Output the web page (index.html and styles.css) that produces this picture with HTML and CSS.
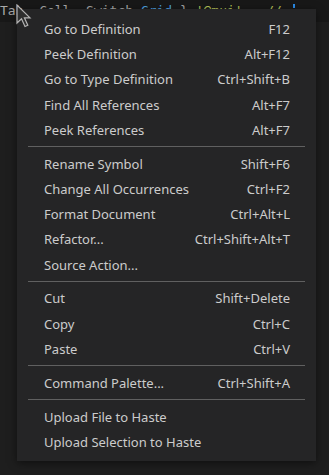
FILE: index.html
```html
<!DOCTYPE html>
<html>
<head>
  <title>Editor context menu</title>
  <meta name="viewport" content="width=device-width, initial-scale=1.0">
  <link rel="stylesheet" href="styles.css">
</head>
<body>
  <div class="editor">
    <div class="code-line"><span class="tok-plain">Tab, Cell, Switch </span><span class="tok-kw">Grid </span><span class="tok-plain">} </span><span class="tok-str">'@mui'</span><span class="tok-plain"> ; </span><span class="tok-str">//</span></div>
    <span class="caret"></span>
  </div>

  <div class="menu">
    <div class="item"><span>Go to Definition</span><span class="key">F12</span></div>
    <div class="item"><span>Peek Definition</span><span class="key">Alt+F12</span></div>
    <div class="item"><span>Go to Type Definition</span><span class="key">Ctrl+Shift+B</span></div>
    <div class="item"><span>Find All References</span><span class="key">Alt+F7</span></div>
    <div class="item"><span>Peek References</span><span class="key">Alt+F7</span></div>
    <div class="sep"></div>
    <div class="item"><span>Rename Symbol</span><span class="key">Shift+F6</span></div>
    <div class="item"><span>Change All Occurrences</span><span class="key">Ctrl+F2</span></div>
    <div class="item"><span>Format Document</span><span class="key">Ctrl+Alt+L</span></div>
    <div class="item"><span>Refactor...</span><span class="key">Ctrl+Shift+Alt+T</span></div>
    <div class="item"><span>Source Action...</span></div>
    <div class="sep"></div>
    <div class="item"><span>Cut</span><span class="key">Shift+Delete</span></div>
    <div class="item"><span>Copy</span><span class="key">Ctrl+C</span></div>
    <div class="item"><span>Paste</span><span class="key">Ctrl+V</span></div>
    <div class="sep"></div>
    <div class="item"><span>Command Palette...</span><span class="key">Ctrl+Shift+A</span></div>
    <div class="sep"></div>
    <div class="item"><span>Upload File to Haste</span></div>
    <div class="item"><span>Upload Selection to Haste</span></div>
  </div>

  <svg class="pointer" width="16" height="26" viewBox="0 0 16 26">
    <path d="M1 1 L1 19 L5.5 14.8 L9 22.5 L11.8 21.3 L8.4 13.8 L14 13.8 Z" fill="#2e2e2e" stroke="#b4b4b4" stroke-width="1.2" stroke-linejoin="miter"/>
  </svg>
</body>
</html>
```

FILE: styles.css
```css
body {
  margin: 0;
  background: #1e1e1e;
  height: 475px;
  overflow: hidden;
  font-family: 'Noto Sans', sans-serif;
}
.editor {
  height: 22px;
  background: #181818;
  position: relative;
  overflow: hidden;
}
.code-line {
  font-family: 'DejaVu Sans Mono', monospace;
  font-size: 13px;
  line-height: 22px;
  white-space: nowrap;
  width: 300px;
  overflow: hidden;
  color: #a8a8a8;
}
.tok-plain { color: #a8a8a8; }
.tok-kw { color: #4fa3e0; }
.tok-str { color: #b5c35a; }
.caret {
  position: absolute;
  left: 293px;
  top: 4px;
  width: 2px;
  height: 4px;
  background: #2a8be8;
}
.menu {
  position: absolute;
  left: 17px;
  top: 9px;
  width: 299px;
  box-sizing: border-box;
  padding: 7.5px 0 6px;
  background: #252526;
  box-shadow: 0 2px 8px rgba(0, 0, 0, 0.5);
  color: #cccccc;
  font-size: 13px;
}
.item {
  height: 25.2px;
  display: flex;
  align-items: center;
  justify-content: space-between;
  padding: 0 26px 0 27px;
}
.sep {
  margin: 4px 11px 3.75px;
  border-top: 1px solid #606060;
}
.pointer {
  position: absolute;
  left: 16px;
  top: 4px;
}
```
